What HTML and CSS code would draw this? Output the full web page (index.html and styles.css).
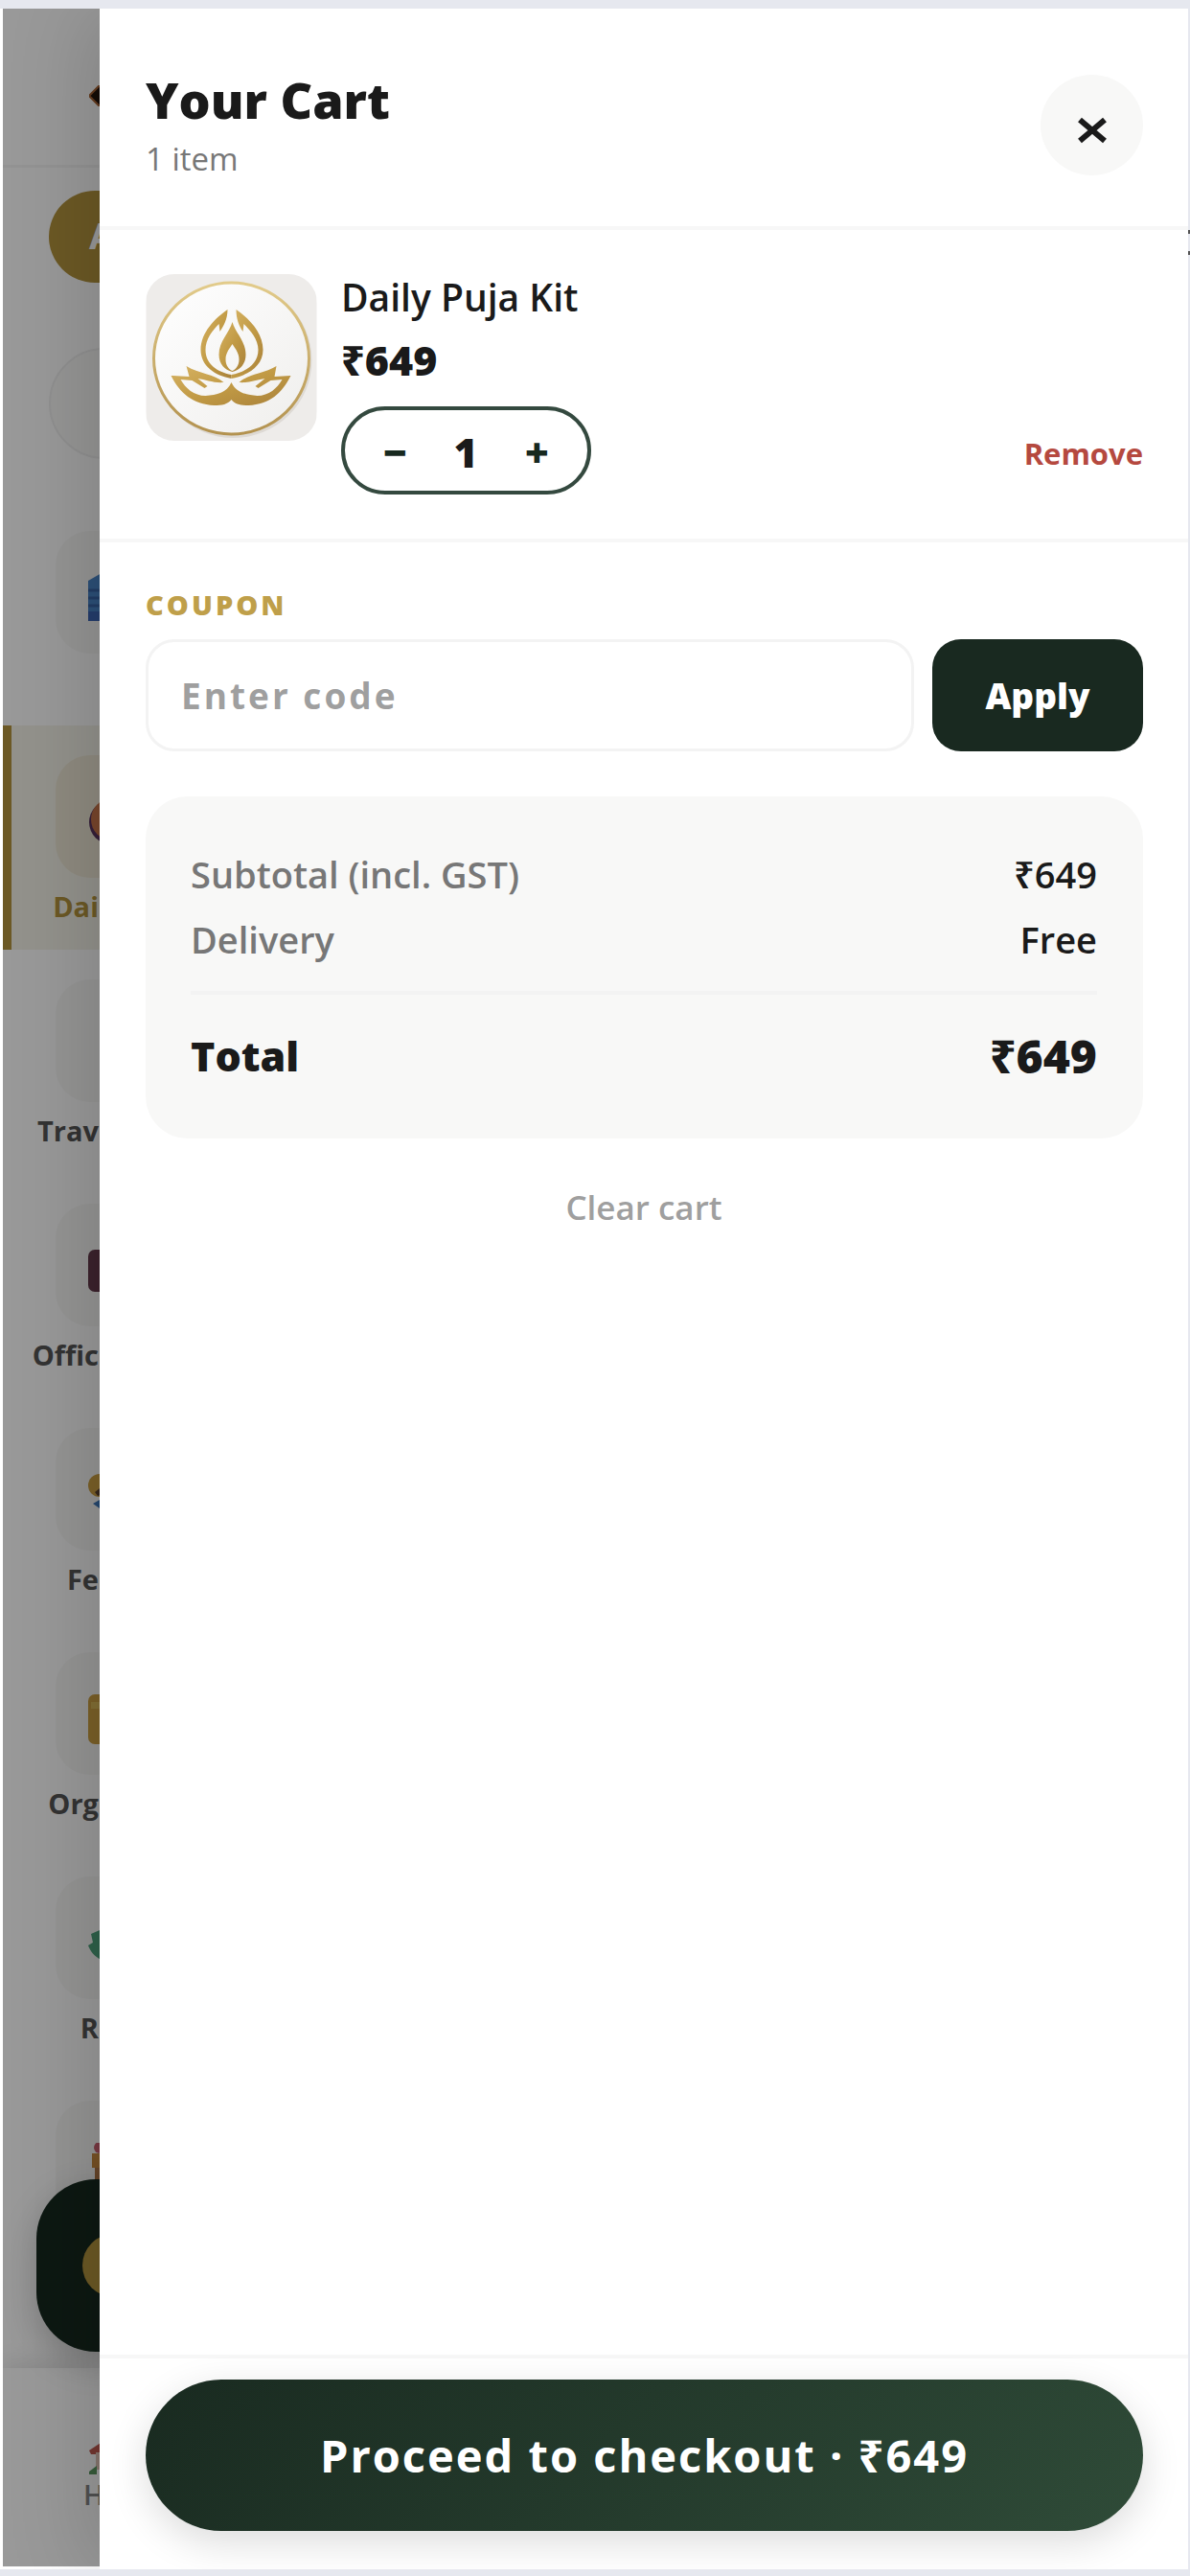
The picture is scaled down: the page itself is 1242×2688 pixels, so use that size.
FILE: index.html
```html
<!DOCTYPE html>
<html lang="en">

<head>
    <meta charset="UTF-8">
    <meta name="viewport" content="width=device-width, initial-scale=1.0">
    <title>Your Cart</title>
    <link rel="stylesheet" href="styles.css">
</head>

<body>

    <div class="screen">

        <!-- Shop page behind the drawer -->
        <div class="shop">
            <header class="shop-header">
                <svg class="shop-logo" viewBox="0 0 20 20"><path d="M0 10 10 0h10v20H10z" fill="#20130b" stroke="#a86434" stroke-width="2"/></svg>
            </header>
            <div class="shop-tools">
                <div class="avatar">A</div>
                <div class="search"></div>
            </div>
            <nav class="rail">
                <a href="#" class="rail-item">
                    <span class="tile"><svg viewBox="0 0 40 52"><path d="M0 8 14 0h26v50H0z" fill="#4a86c8"/><path d="M0 18h40M0 26h40M0 34h40" stroke="#3a66a8" stroke-width="3"/><path d="M0 40h40v10H0z" fill="#3f66b4"/></svg></span>
                </a>
                <a href="#" class="rail-item active">
                    <span class="tile"><svg viewBox="0 0 40 52"><circle cx="24" cy="26" r="23" fill="#5a3560"/><circle cx="25" cy="23" r="22" fill="#c9754a"/></svg></span>
                    <span class="rail-label">Dai</span>
                </a>
                <a href="#" class="rail-item">
                    <span class="tile"></span>
                    <span class="rail-label">Trav</span>
                </a>
                <a href="#" class="rail-item">
                    <span class="tile"><svg viewBox="0 0 40 52"><rect y="4" width="50" height="44" rx="7" fill="#643a4c"/></svg></span>
                    <span class="rail-label">Offic</span>
                </a>
                <a href="#" class="rail-item">
                    <span class="tile"><svg viewBox="0 0 40 52"><circle cx="12" cy="16" r="12" fill="#cda044"/><path d="M7 23l5-4 4 6-6 2z" fill="#5a4230"/><path d="M5 35l7-4v9z" fill="#3e77b8"/></svg></span>
                    <span class="rail-label">Fe</span>
                </a>
                <a href="#" class="rail-item">
                    <span class="tile"><svg viewBox="0 0 40 52"><rect width="50" height="52" rx="7" fill="#cda044"/><path d="M3 8h40v7H3z" fill="#d9b858"/></svg></span>
                    <span class="rail-label">Org</span>
                </a>
                <a href="#" class="rail-item">
                    <span class="tile"><svg viewBox="0 0 40 52"><path d="M3 16l14-6v34C9 42 3 36 0 28l5-3z" fill="#4fa27c"/></svg></span>
                    <span class="rail-label">R</span>
                </a>
                <a href="#" class="rail-item">
                    <span class="tile"><svg viewBox="0 0 40 52"><circle cx="12" cy="5" r="6" fill="#c8606f"/><path d="M4 11h18v15H4z" fill="#c88a40"/><path d="M7 26h15v26H7z" fill="#b07848"/></svg></span>
                </a>
            </nav>
            <nav class="bottom-nav">
                <a href="#" class="nav-home">
                    <svg viewBox="0 0 18 38"><path d="M0 12 18 0v16H2z" fill="#c05a50"/><path d="M7 14h11v18H7z" fill="#e0c5b8"/><path d="M0 34l8-6v9H0z" fill="#5c9a62"/></svg>
                    <span>H</span>
                </a>
            </nav>
            <button type="button" class="chat" aria-label="Chat"><span></span></button>
            <div class="backdrop"></div>
        </div>

        <!-- Cart drawer -->
        <aside class="drawer">
            <header class="drawer-header">
                <div>
                    <h1>Your Cart</h1>
                    <p>1 item</p>
                </div>
                <button type="button" class="close" aria-label="Close">
                    <svg viewBox="0 0 32 28"><path d="M3 3 29 25M29 3 3 25" stroke="#1a1a1a" stroke-width="6"/></svg>
                </button>
            </header>

            <div class="drawer-body">
                <div class="cart-item">
                    <svg class="thumb" viewBox="0 0 178 174">
                        <defs>
                            <linearGradient id="gold" x1="0" y1="0" x2="1" y2="1">
                                <stop offset="0" stop-color="#d6b262"/>
                                <stop offset="0.5" stop-color="#c19a45"/>
                                <stop offset="1" stop-color="#a9813a"/>
                            </linearGradient>
                            <linearGradient id="ring" x1="0" y1="0" x2="0" y2="1">
                                <stop offset="0" stop-color="#e2cb8a"/>
                                <stop offset="1" stop-color="#b3924f"/>
                            </linearGradient>
                            <linearGradient id="plate" x1="0" y1="0" x2="1" y2="1">
                                <stop offset="0" stop-color="#ffffff"/>
                                <stop offset="1" stop-color="#efeeec"/>
                            </linearGradient>
                        </defs>
                        <rect width="178" height="174" fill="#eeecea"/>
                        <ellipse cx="91" cy="90" rx="82" ry="81" fill="#dedad5"/>
                        <ellipse cx="89" cy="88" rx="81" ry="79" fill="url(#plate)" stroke="url(#ring)" stroke-width="3"/>
                        <g fill="url(#gold)">
                            <!-- petals -->
                            <path d="M85 37C72 46 57 61 57 79c0 17 15 27 32 30v-4C74 102 62 94 62 79c0-11 7-20 14-27l1 8c4-6 8-13 8-23z"/>
                            <path d="M94 37c13 9 28 24 28 42 0 17-16 27-33 30v-4c15-3 28-11 28-26 0-11-8-20-15-27l-1 8c-4-6-7-13-7-23z"/>
                            <!-- flame -->
                            <path fill-rule="evenodd" d="M90 50c-3 11-14 20-14 34 0 10 6 16 14 18 8-2 14-8 14-18 0-14-11-23-14-34zM90 73c4 6 7 10 7 16s-3 10-7 12c-4-2-7-6-7-12s3-10 7-16z"/>
                            <!-- hands -->
                            <path d="M28 106l17 1-3-11c13 8 29 8 39 17-10 1-19-3-27-4l10 8-3 2-13-8-12-1c5 9 14 17 26 17 12-1 22-3 27-14 5 11 16 13 27 14 12 0 21-8 26-17l-12 1-13 8-3-2 10-8c-8 1-17 5-27 4 10-9 26-9 39-17l-2 11 17-1c-9 18-22 30-44 31-8 0-14-1-18-6-4 5-10 6-18 6-22-1-36-13-45-31z"/>
                        </g>
                    </svg>
                    <div class="item-info">
                        <h2>Daily Puja Kit</h2>
                        <p class="price">₹649</p>
                        <div class="item-actions">
                            <div class="qty">
                                <button type="button" aria-label="Decrease">−</button>
                                <span>1</span>
                                <button type="button" aria-label="Increase">+</button>
                            </div>
                            <button type="button" class="remove">Remove</button>
                        </div>
                    </div>
                </div>

                <form class="coupon">
                    <label for="coupon">COUPON</label>
                    <div class="coupon-row">
                        <input type="text" id="coupon" name="coupon" placeholder="Enter code">
                        <button type="button">Apply</button>
                    </div>
                </form>

                <div class="summary">
                    <div class="row"><span>Subtotal (incl. GST)</span><strong>₹649</strong></div>
                    <div class="row"><span>Delivery</span><strong>Free</strong></div>
                    <div class="total"><span>Total</span><strong>₹649</strong></div>
                </div>

                <button type="button" class="clear">Clear cart</button>
            </div>

            <footer class="drawer-footer">
                <button type="button" class="checkout">Proceed to checkout · ₹649</button>
            </footer>
        </aside>

    </div>

</body>

</html>
```
FILE: styles.css
```css
* {
    margin: 0;
    padding: 0;
    box-sizing: border-box;
}

body {
    font-family: "Open Sans", "Noto Sans", sans-serif;
    background: #e6e8ef;
    color: #1a1a1a;
    height: 100vh;
    padding: 9px 2px 7px 0;
}

button {
    font-family: inherit;
    border: none;
    background: none;
    cursor: pointer;
}

a {
    color: inherit;
    text-decoration: none;
}

.screen {
    display: grid;
    grid-template-columns: 104px 1fr;
    height: 100%;
    border-left: 3px solid #fff;
    background: #fff;
    position: relative;
}

/* sliver of the page to the right of the phone */
.screen::after {
    content: '';
    position: absolute;
    right: -2px;
    top: 231px;
    width: 2px;
    height: 18px;
    border-top: 4px solid #555;
    border-bottom: 4px solid #555;
}

/* Shop page */
.shop {
    position: relative;
    display: flex;
    flex-direction: column;
    min-height: 0;
    overflow: hidden;
    border-bottom: 3px solid #fff;
}

.backdrop {
    position: absolute;
    inset: 0;
    background: rgba(0, 0, 0, 0.4);
}

.shop-header {
    flex: none;
    height: 166px;
    padding-top: 80px;
    border-bottom: 3px solid #f6f6f6;
}

.shop-logo {
    display: block;
    width: 22px;
    height: 22px;
    margin-left: 90px;
}

.shop-tools {
    flex: none;
    display: flex;
    flex-direction: column;
    gap: 68px;
    padding: 24px 0 44px 48px;
}

.avatar {
    width: 120px;
    height: 96px;
    padding-left: 42px;
    border-radius: 48px;
    background: #b4943e;
    color: #fff;
    font-size: 38px;
    font-weight: 700;
    line-height: 92px;
}

.search {
    width: 160px;
    height: 116px;
    border: 2px solid #f0f0f0;
    border-radius: 58px;
    background: #fafaf9;
}

.rail {
    flex: 1;
    min-height: 0;
    overflow: hidden;
}

.rail-item {
    display: flex;
    flex-direction: column;
    gap: 10px;
    height: 234px;
    padding: 31px 0 0 55px;
}

.rail-item.active {
    border-left: 9px solid #b4943e;
    background: #f6f4ea;
    padding-left: 46px;
}

.tile {
    display: flex;
    flex: none;
    align-items: center;
    width: 132px;
    height: 128px;
    padding: 12px 0 0 34px;
    border-radius: 36px;
    background: #f8f8f7;
}

.active .tile {
    background: #eee8d6;
}

.tile svg {
    width: 40px;
    height: 52px;
}

.rail-label {
    align-self: flex-end;
    padding-right: 4px;
    color: #555;
    font-size: 29px;
    font-weight: 700;
    line-height: 40px;
}

.active .rail-label {
    color: #b4943e;
}

.bottom-nav {
    flex: none;
    height: 207px;
    padding: 74px 0 0 84px;
    background: #fff;
    box-shadow: 0 -4px 24px rgba(0, 0, 0, 0.12);
}

.nav-home {
    display: flex;
    flex-direction: column;
    color: #888;
    font-size: 29px;
    font-weight: 600;
    line-height: 40px;
}

.nav-home svg {
    width: 18px;
    height: 38px;
    margin-left: 6px;
}

.chat {
    position: absolute;
    left: 35px;
    bottom: 224px;
    width: 160px;
    height: 180px;
    padding-left: 48px;
    border-radius: 62px;
    background: #17291f;
    box-shadow: 0 12px 36px rgba(0, 0, 0, 0.2);
}

.chat span {
    display: block;
    width: 66px;
    height: 66px;
    border-radius: 50%;
    background: #b4943e;
}

/* Drawer */
.drawer {
    position: relative;
    display: flex;
    flex-direction: column;
    min-width: 0;
    margin-left: -3px;
    background: #fff;
    box-shadow: -12px 0 80px rgba(0, 0, 0, 0.16);
    clip-path: inset(0 0 0 -104px);
}

.drawer-header {
    display: flex;
    justify-content: space-between;
    align-items: center;
    padding: 61px 47px 46px 48px;
    border-bottom: 4px solid #f7f7f7;
}

h1 {
    font-size: 52px;
    font-weight: 800;
    line-height: 68px;
}

.drawer-header p {
    padding-top: 4px;
    color: #777;
    font-size: 33px;
    line-height: 48px;
}

.close {
    display: flex;
    justify-content: center;
    align-items: center;
    width: 107px;
    height: 105px;
    padding-top: 12px;
    border-radius: 50%;
    background: #f8f8f7;
}

.close svg {
    width: 32px;
    height: 28px;
}

.drawer-body {
    flex: 1;
    display: flex;
    flex-direction: column;
}

.cart-item {
    display: flex;
    gap: 25px;
    padding: 46px 47px 46px 48px;
    border-bottom: 4px solid #f7f7f7;
}

.thumb {
    flex: none;
    width: 179px;
    height: 174px;
    border-radius: 30px;
}

.item-info {
    flex: 1;
    display: flex;
    flex-direction: column;
}

h2 {
    font-size: 39px;
    font-weight: 600;
    line-height: 48px;
}

.price {
    margin: 12px 0 18px;
    font-size: 43px;
    font-weight: 800;
    line-height: 60px;
}

.item-actions {
    display: flex;
    justify-content: space-between;
    align-items: center;
}

.qty {
    display: flex;
    justify-content: space-between;
    align-items: center;
    width: 261px;
    height: 92px;
    padding: 4px 40px 0;
    border: 4px solid #34493f;
    border-radius: 46px;
    font-size: 43px;
    font-weight: 800;
    line-height: 60px;
}

.qty button {
    color: #17291f;
    font-size: 43px;
    font-weight: 800;
    line-height: 60px;
}

.remove {
    padding-top: 6px;
    color: #b5493f;
    font-size: 31px;
    font-weight: 700;
    line-height: 48px;
}

.coupon {
    padding: 45px 47px 47px 48px;
}

.coupon label {
    display: block;
    margin-bottom: 16px;
    color: #bf9f4a;
    font-size: 29px;
    font-weight: 800;
    letter-spacing: 3px;
    line-height: 40px;
}

.coupon-row {
    display: flex;
    gap: 19px;
    height: 117px;
}

.coupon input {
    flex: 1;
    min-width: 0;
    padding: 0 34px;
    border: 3px solid #f3f3f3;
    border-radius: 30px;
    outline: none;
    background: #fff;
    color: #1a1a1a;
    font-family: inherit;
    font-size: 37px;
    font-weight: 700;
    letter-spacing: 3px;
}

.coupon input::placeholder {
    color: #9f9f9f;
}

.coupon button {
    width: 220px;
    border-radius: 30px;
    background: #192920;
    color: #fff;
    font-size: 37px;
    font-weight: 800;
}

.summary {
    margin: 0 47px 44px 48px;
    padding: 47px 48px 54px 47px;
    border-radius: 44px;
    background: #f8f8f7;
}

.row,
.total {
    display: flex;
    justify-content: space-between;
    font-size: 38px;
    line-height: 68px;
}

.row span {
    color: #777;
    font-weight: 600;
}

.row strong {
    font-weight: 600;
}

.total {
    margin-top: 20px;
    padding-top: 32px;
    border-top: 4px solid #f3f3f3;
    font-size: 43px;
    font-weight: 800;
    line-height: 64px;
}

.total strong {
    font-size: 48px;
    font-weight: 800;
}

.clear {
    align-self: center;
    color: #9f9f9f;
    font-size: 35px;
    font-weight: 600;
    line-height: 56px;
}

.drawer-footer {
    padding: 22px 47px 40px 48px;
    border-top: 4px solid #f7f7f7;
}

.checkout {
    display: block;
    width: 100%;
    height: 158px;
    border-radius: 79px;
    background: linear-gradient(135deg, #192a20, #2f4b38);
    box-shadow: 0 12px 40px rgba(0, 0, 0, 0.14);
    color: #fff;
    font-size: 47px;
    font-weight: 700;
    letter-spacing: 2px;
}
```
